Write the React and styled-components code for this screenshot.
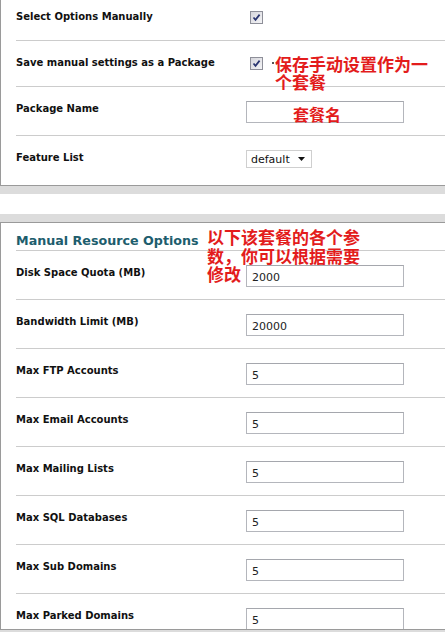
import React from "react";
import styled, { createGlobalStyle } from "styled-components";

const GlobalStyle = createGlobalStyle`
  html, body { margin: 0; padding: 0; background: #ffffff; }
  body { font-family: "DejaVu Sans", Verdana, sans-serif; color: #111; }
`;

const Screen = styled.div`
  position: relative;
  width: 445px;
  height: 632px;
  overflow: hidden;
  background: #fff;
`;

const Content = styled.div`
  margin-top: -5px;
`;

const Panel = styled.section`
  border-left: 1px solid #9a9a9a;
  border-top: ${(p) => (p.$top ? "1px solid #9a9a9a" : "none")};
  border-bottom: 1px solid #9a9a9a;
  padding-left: 15px;
  height: ${(p) => (p.$height ? `${p.$height}px` : "auto")};
  overflow: hidden;
`;

const Shade = styled.div`
  height: ${(p) => p.$h}px;
  background: #dcdcdc;
`;

const Spacer = styled.div`
  height: ${(p) => p.$h}px;
`;

const Heading = styled.h2`
  margin: 0;
  height: 28px;
  box-sizing: border-box;
  padding-top: 10px;
  font-size: 12.7px;
  line-height: 16px;
  font-weight: bold;
  color: #1d5d6d;
  border-bottom: 1px solid #cccccc;
`;

const Row = styled.div`
  display: grid;
  grid-template-columns: 230px 1fr;
  align-items: start;
  height: ${(p) => p.$h}px;
  padding-top: 14px;
  box-sizing: content-box;
  border-bottom: ${(p) => (p.$last ? "none" : "1px solid #cccccc")};
`;

const Label = styled.div`
  margin-top: 1px;
  font-size: 10px;
  line-height: 13px;
  font-weight: bold;
  color: #111;
  white-space: nowrap;
`;

const Control = styled.div`
  display: flex;
  align-items: center;
`;

const Check = styled.span`
  display: inline-flex;
  align-items: center;
  justify-content: center;
  box-sizing: border-box;
  width: 13px;
  height: 13px;
  margin: 2px 0 0 4px;
  border: 1px solid #8e8f99;
  background: linear-gradient(135deg, #d6d6dc 0%, #f4f4f6 100%);
`;

const TextBox = styled.div`
  box-sizing: border-box;
  width: 158px;
  height: 22px;
  border: 1px solid #b4b6bc;
  border-top-color: #a5a7ad;
  background: #fff;
  padding: 5px 0 0 5px;
  font-size: 11px;
  line-height: 13px;
  color: #222;
`;

const SelectBox = styled.div`
  box-sizing: border-box;
  width: 66px;
  height: 18px;
  border: 1px solid #cfcfcf;
  background: #fff;
  display: flex;
  align-items: center;
  justify-content: space-between;
  padding: 0 6px 0 4px;
  font-size: 11px;
  color: #111;
`;

const Note = styled.div`
  position: absolute;
  left: ${(p) => p.$x}px;
  top: ${(p) => p.$y}px;
  display: flex;
  flex-direction: column;
  align-items: flex-start;
  font-family: "Noto Sans CJK SC", "Noto Sans", sans-serif;
  font-size: ${(p) => p.$size}px;
  line-height: ${(p) => p.$lh}px;
  font-weight: 700;
  color: #e31c1c;
  white-space: nowrap;
`;

const NoteLine = styled.span`
  display: block;
`;

const Dot = styled.span`
  position: absolute;
  left: 272px;
  top: 62px;
  width: 2px;
  height: 2px;
  background: #555;
`;

const CheckMark = () => (
  <svg width="9" height="9" viewBox="0 0 9 9">
    <path d="M1.5 4.5 L3.5 6.8 L7.6 1.6" fill="none" stroke="#2a3570" strokeWidth="1.7" />
  </svg>
);

const Caret = () => (
  <svg width="7" height="4" viewBox="0 0 7 4">
    <path d="M0 0 H7 L3.5 4 Z" fill="#111" />
  </svg>
);

const resources = [
  ["Disk Space Quota (MB)", "2000"],
  ["Bandwidth Limit (MB)", "20000"],
  ["Max FTP Accounts", "5"],
  ["Max Email Accounts", "5"],
  ["Max Mailing Lists", "5"],
  ["Max SQL Databases", "5"],
  ["Max Sub Domains", "5"],
  ["Max Parked Domains", "5"],
];

const Annotation = ({ x, y, size, lh, lines }) => (
  <Note $x={x} $y={y} $size={size} $lh={lh}>
    {lines.map((line) => (
      <NoteLine key={line}>{line}</NoteLine>
    ))}
  </Note>
);

export default function App() {
  return (
    <Screen>
      <GlobalStyle />
      <Content>
        <Panel>
          <Row $h={31}>
            <Label>Select Options Manually</Label>
            <Control>
              <Check><CheckMark /></Check>
            </Control>
          </Row>
          <Row $h={31}>
            <Label>Save manual settings as a Package</Label>
            <Control>
              <Check><CheckMark /></Check>
            </Control>
          </Row>
          <Row $h={34}>
            <Label>Package Name</Label>
            <Control>
              <TextBox />
            </Control>
          </Row>
          <Row $h={35} $last>
            <Label>Feature List</Label>
            <Control>
              <SelectBox>
                <span>default</span>
                <Caret />
              </SelectBox>
            </Control>
          </Row>
        </Panel>
        <Shade $h={8} />
        <Spacer $h={20} />
        <Shade $h={8} />
        <Panel $top $height={406}>
          <Heading>Manual Resource Options</Heading>
          {resources.map(([label, value]) => (
            <Row key={label} $h={34}>
              <Label>{label}</Label>
              <Control>
                <TextBox>{value}</TextBox>
              </Control>
            </Row>
          ))}
        </Panel>
        <Shade $h={8} />
      </Content>

      <Dot />
      <Annotation x={275} y={55} size={17} lh={18} lines={["保存手动设置作为一", "个套餐"]} />
      <Annotation x={293} y={105} size={16} lh={18} lines={["套餐名"]} />
      <Annotation
        x={207}
        y={228}
        size={17}
        lh={18.5}
        lines={["以下该套餐的各个参", "数，你可以根据需要", "修改"]}
      />
    </Screen>
  );
}
